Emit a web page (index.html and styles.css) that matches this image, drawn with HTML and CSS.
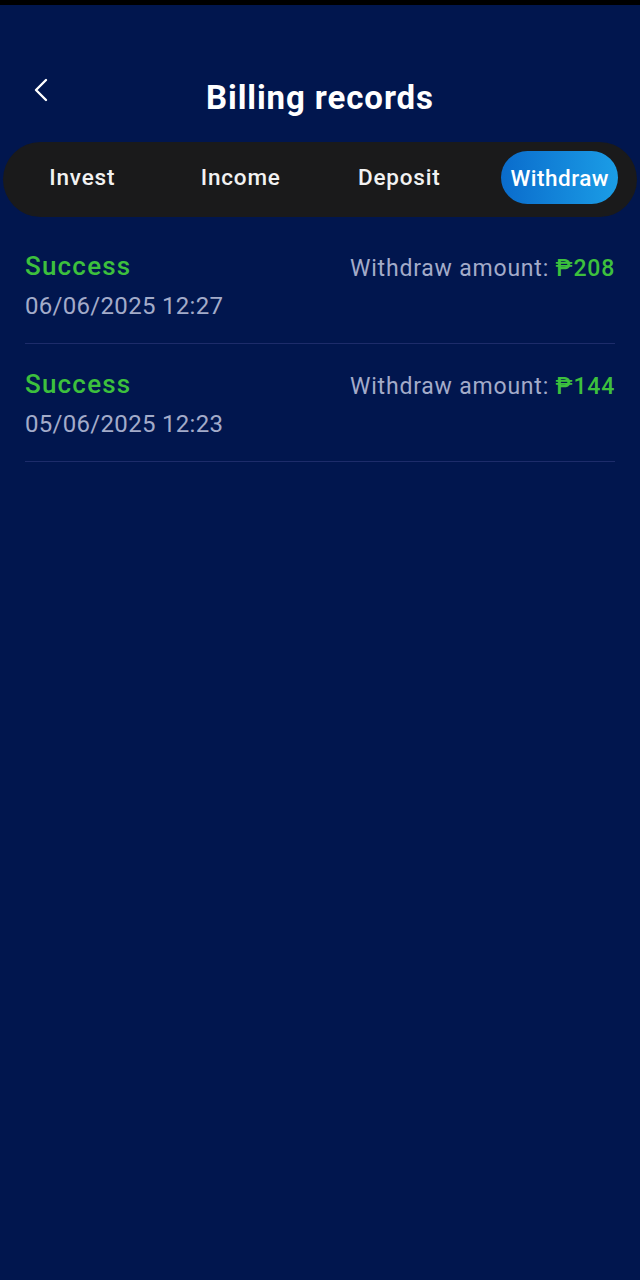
FILE: index.html
```html
<!DOCTYPE html>
<html>
<head>
<meta charset="utf-8">
<link rel="stylesheet" href="styles.css">
</head>
<body>
<div class="statusbar"></div>
<header class="header">
  <button class="back" aria-label="Back">
    <svg width="16" height="24" viewBox="0 0 16 24"><path d="M13 2 L3 12 L13 22" fill="none" stroke="#fff" stroke-width="2.4" stroke-linecap="round" stroke-linejoin="round"/></svg>
  </button>
  <h1 class="title">Billing records</h1>
</header>
<nav class="tabs">
  <div class="tab">Invest</div>
  <div class="tab">Income</div>
  <div class="tab">Deposit</div>
  <div class="tab"><span class="pill">Withdraw</span></div>
</nav>
<ul class="list">
  <li class="row">
    <div class="left">
      <div class="status">Success</div>
      <div class="date">06/06/2025 12:27</div>
    </div>
    <div class="amount">Withdraw amount: <span class="money">₱208</span></div>
  </li>
  <li class="row">
    <div class="left">
      <div class="status">Success</div>
      <div class="date">05/06/2025 12:23</div>
    </div>
    <div class="amount">Withdraw amount: <span class="money">₱144</span></div>
  </li>
</ul>
</body>
</html>
```
FILE: styles.css
```css
* { box-sizing: border-box; }
html, body {
  margin: 0;
  padding: 0;
  height: 100%;
}
body {
  background: #01164e;
  font-family: Roboto, "Liberation Sans", sans-serif;
  color: #fff;
  width: 640px;
  min-height: 1280px;
}
.statusbar {
  height: 5px;
  background: #000;
}
.header {
  position: relative;
  height: 136px;
  display: flex;
  align-items: center;
  justify-content: center;
  padding-top: 48px;
}
.back {
  position: absolute;
  left: 33px;
  top: 73px;
  background: none;
  border: 0;
  padding: 0;
  width: 16px;
  height: 24px;
  display: block;
}
.back svg { display: block; }
.title {
  margin: 0;
  font-size: 33px;
  font-weight: 700;
  letter-spacing: 0.9px;
}
.tabs {
  margin: 1px 3px 0;
  height: 75px;
  padding-bottom: 5px;
  background: #1a1a1b;
  border-radius: 38px;
  display: grid;
  grid-template-columns: repeat(4, 1fr);
  align-items: center;
}
.tab {
  text-align: center;
  font-size: 22.5px;
  font-weight: 500;
  letter-spacing: 0.8px;
  color: #f2f2f2;
}
.pill {
  display: inline-block;
  background: linear-gradient(90deg, #0a6ccc, #1b9de6);
  border-radius: 28px;
  padding: 14px 9px 13px;
  margin-left: 4px;
  color: #fff;
  letter-spacing: 0.5px;
}
.list {
  list-style: none;
  margin: 9px 0 0;
  padding: 0 25px;
}
.row {
  display: flex;
  justify-content: space-between;
  align-items: flex-start;
  height: 118px;
  padding-top: 24px;
  border-bottom: 1.5px solid #1d2c6a;
}
.status {
  font-size: 26px;
  font-weight: 500;
  letter-spacing: 1.2px;
  color: #3dc03d;
  line-height: 32px;
}
.date {
  font-size: 24px;
  color: #a3abc9;
  line-height: 30px;
  margin-top: 9px;
  letter-spacing: 0.3px;
}
.amount {
  font-size: 23px;
  color: #a3abc9;
  line-height: 32px;
  margin-top: 3px;
  letter-spacing: 0.8px;
}
.money {
  color: #3dc03d;
  font-weight: 500;
}
```
